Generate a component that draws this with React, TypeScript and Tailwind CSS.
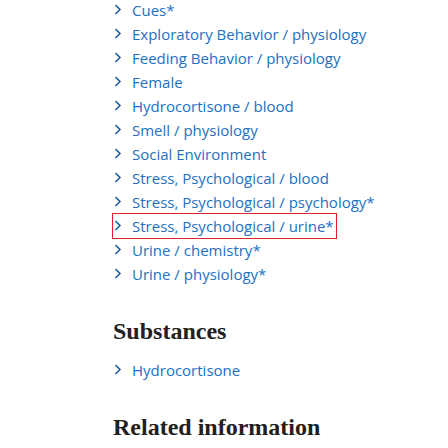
import React from "react";

const items = [
  "Cues*",
  "Exploratory Behavior / physiology",
  "Feeding Behavior / physiology",
  "Female",
  "Hydrocortisone / blood",
  "Smell / physiology",
  "Social Environment",
  "Stress, Psychological / blood",
  "Stress, Psychological / psychology*",
  "Stress, Psychological / urine*",
  "Urine / chemistry*",
  "Urine / physiology*",
];

function Chevron() {
  return (
    <svg width="8" height="11" viewBox="0 0 8 11" className="shrink-0 block">
      <path d="M1.5 1 L6 5.5 L1.5 10" fill="none" stroke="#1a5fa8" strokeWidth="1.6" />
    </svg>
  );
}

function Row({ text, boxed }: { text: string; boxed?: boolean }) {
  return (
    <div className="h-6 leading-6">
      <span
        className={
          boxed
            ? "inline-flex items-center gap-2.5 pl-px pr-0.5 outline outline-1 outline-[#e0202a]"
            : "inline-flex items-center gap-2.5 pl-px pr-0.5"
        }
      >
        <Chevron />
        <span className="text-[#2370c0]">{text}</span>
      </span>
    </div>
  );
}

export default function App() {
  return (
    <div
      className="w-[448px] h-[448px] overflow-hidden bg-white pl-[113px]"
      style={{ fontFamily: '"Open Sans", sans-serif' }}
    >
      <div className="-mt-[3px] text-[15px]">
        {items.map((t, i) => (
          <Row key={i} text={t} boxed={i === 9} />
        ))}
      </div>
      <h2
        className="mt-[30px] text-[24px] leading-[32px] font-bold text-[#212121]"
        style={{ fontFamily: '"Liberation Serif", serif' }}
      >
        Substances
      </h2>
      <div className="mt-[10px] text-[15px]">
        <Row text="Hydrocortisone" />
      </div>
      <h2
        className="mt-[30px] text-[24px] leading-[32px] font-bold text-[#212121]"
        style={{ fontFamily: '"Liberation Serif", serif' }}
      >
        Related information
      </h2>
    </div>
  );
}
